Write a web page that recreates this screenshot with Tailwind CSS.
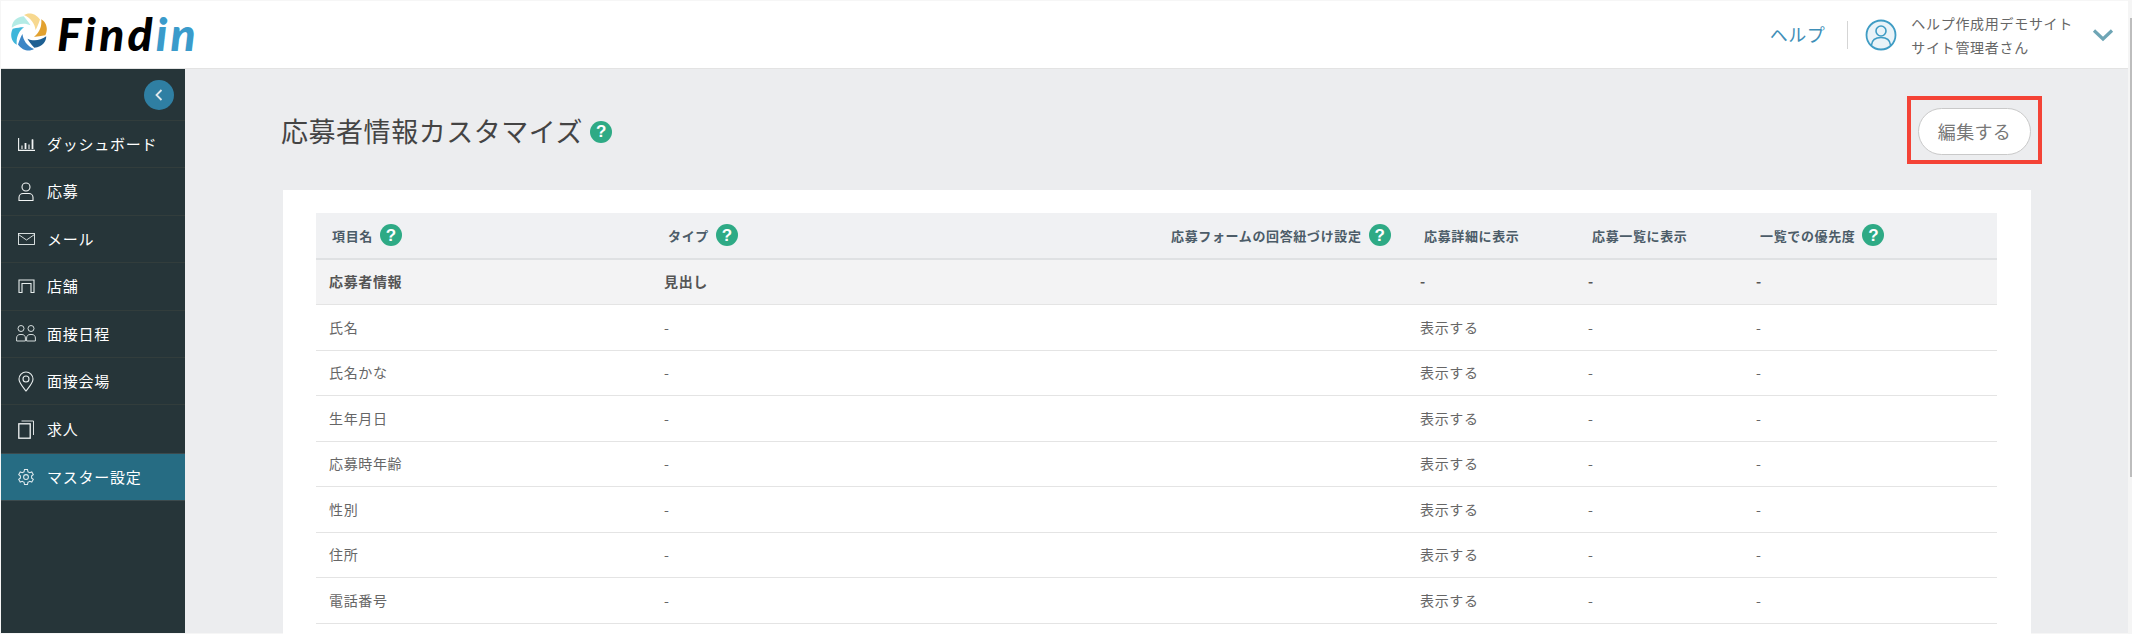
<!doctype html>
<html lang="ja"><head><meta charset="utf-8"><script src="https://cdn.jsdelivr.net/npm/@tailwindcss/browser@4"></script></head>
<body class="m-0">
<div class="relative h-[634px] w-[2132px] overflow-hidden bg-[#f6f6f6] pl-px pt-px pb-px font-['Noto_Sans_CJK_JP',sans-serif] tracking-[0.04em] text-[#666]">
  <div class="flex h-full flex-col">
    <header class="flex h-[68px] shrink-0 items-center justify-between border-b border-[#e3e3e3] bg-white pr-[18px]">
      <div class="flex items-center pl-[9px]">
        <svg width="38" height="38" viewBox="-19 -19 38 38" class="mb-[6px]">
          <path fill="#F7D88F" d="M-5-17C-1-19.500 6-19.500 11-12.500 9-7 8-4 6.500-2 6-8 2-14-5-17Z"/>
          <path fill="#E2A12F" transform="rotate(60)" d="M-5-17C-1-19.500 6-19.500 11-12.500 9-7 8-4 6.500-2 6-8 2-14-5-17Z"/>
          <path fill="#1D5F92" transform="rotate(120)" d="M-5-17C-1-19.500 6-19.500 11-12.500 9-7 8-4 6.500-2 6-8 2-14-5-17Z"/>
          <path fill="#3C86C6" transform="rotate(180)" d="M-5-17C-1-19.500 6-19.500 11-12.500 9-7 8-4 6.500-2 6-8 2-14-5-17Z"/>
          <path fill="#3FB6DA" transform="rotate(240)" d="M-5-17C-1-19.500 6-19.500 11-12.500 9-7 8-4 6.500-2 6-8 2-14-5-17Z"/>
          <path fill="#B4EBE5" transform="rotate(300)" d="M-5-17C-1-19.500 6-19.500 11-12.500 9-7 8-4 6.500-2 6-8 2-14-5-17Z"/>
        </svg>
        <div class="mb-[2px] ml-[9px] font-['Lato',sans-serif] text-[46px] leading-none font-black italic tracking-[0.07em] text-black">Find<span class="text-[#3A9BCB]">in</span></div>
      </div>
      <div class="flex items-center">
        <span class="text-[18px] tracking-[0.03em] text-[#3F8FB8]">ヘルプ</span>
        <div class="ml-[22px] mr-[17px] h-[28px] w-px bg-[#d5d5d5]"></div>
        <svg width="32" height="32" viewBox="0 0 32 32"><circle cx="16" cy="16" r="14.500" fill="#E9F3F8" stroke="#3F9CC4" stroke-width="1.800"/><circle cx="16" cy="12" r="5" fill="none" stroke="#3F9CC4" stroke-width="1.600"/><path d="M6.500 26c.5-5 4-7.500 9.500-7.500s9 2.500 9.500 7.500" fill="none" stroke="#3F9CC4" stroke-width="1.600"/></svg>
        <div class="ml-[14px] text-[14px] leading-[24px] tracking-[0.05em]"><div>ヘルプ作成用デモサイト</div><div>サイト管理者さん</div></div>
        <svg class="ml-[19px]" width="22" height="14" viewBox="0 0 22 14"><path d="M2 2.500 11 11 20 2.500" fill="none" stroke="#6EA5B5" stroke-width="3.200"/></svg>
      </div>
    </header>
    <div class="flex min-h-0 flex-1">
      <aside class="w-[184px] shrink-0 bg-[#263539] text-[15px] tracking-[0.05em] text-white">
        <div class="flex h-[51px] items-center justify-end pr-[11px]">
          <div class="flex h-[30px] w-[30px] items-center justify-center rounded-full bg-[#2F7FA3]">
            <svg width="10" height="14" viewBox="0 0 10 14"><path d="M7.500 2 2.500 7l5 5" fill="none" stroke="#dfe8ec" stroke-width="1.800"/></svg>
          </div>
        </div>
        <nav class="border-t border-[#323d3c]">
          <a class="flex h-[47.4px] items-center border-b border-[#323d3c]"><span class="flex w-[46px] justify-center pl-[5px]"><svg width="17" height="13" viewBox="0 0 17 13" fill="none" stroke="#f2f5f5"><path d="M.6 0v12.400H17M4 7.500V11M7.500 5v6M11 6.500V11M14.500 1.500V11" stroke-width="1.100"/><path d="M7.500 5v6M14.500 1.500V11" stroke-width="1.700"/></svg></span><span>ダッシュボード</span></a>
          <a class="flex h-[47.4px] items-center border-b border-[#323d3c]"><span class="flex w-[46px] justify-center pl-[4px]"><svg width="16" height="20" viewBox="0 0 16 20" fill="none" stroke="#f2f5f5" stroke-width="1.100"><circle cx="8" cy="5" r="4"/><path d="M1 18.500v-3c0-2.500 2-4 4-4h6c2 0 4 1.500 4 4v3z"/></svg></span><span>応募</span></a>
          <a class="flex h-[47.4px] items-center border-b border-[#323d3c]"><span class="flex w-[46px] justify-center pl-[4px]"><svg width="17" height="12" viewBox="0 0 17 12" fill="none" stroke="#e8eeee" stroke-width=".9"><rect x=".5" y=".5" width="16" height="11"/><path d="M.5 1.500l8 5.500 8-5.500"/></svg></span><span>メール</span></a>
          <a class="flex h-[47.4px] items-center border-b border-[#323d3c]"><span class="flex w-[46px] justify-center pl-[4px]"><svg width="17" height="14" viewBox="0 0 17 14" fill="none" stroke="#e8eeee" stroke-width="1.100"><path d="M1 13.500V1h15v12.500h-3V4.500H4v9z"/></svg></span><span>店舗</span></a>
          <a class="flex h-[47.4px] items-center border-b border-[#323d3c]"><span class="flex w-[46px] justify-center pl-[4px]"><svg width="20" height="17" viewBox="0 0 20 17" fill="none" stroke="#e8eeee" stroke-width=".9"><circle cx="5" cy="3.500" r="3"/><circle cx="15" cy="3.500" r="3"/><path d="M.6 16v-3c0-2 1.400-3.500 3.400-3.500h2c2 0 3.400 1.500 3.400 3.500v3zM10.600 16v-3c0-2 1.400-3.500 3.400-3.500h2c2 0 3.400 1.500 3.400 3.500v3z"/></svg></span><span>面接日程</span></a>
          <a class="flex h-[47.4px] items-center border-b border-[#323d3c]"><span class="flex w-[46px] justify-center pl-[4px]"><svg width="16" height="21" viewBox="0 0 16 21" fill="none" stroke="#e8eeee" stroke-width="1.100"><path d="M8 20C5 16 1 12 1 8a7 7 0 0 1 14 0c0 4-4 8-7 12z"/><circle cx="8" cy="8" r="3"/></svg></span><span>面接会場</span></a>
          <a class="flex h-[47.4px] items-center"><span class="flex w-[46px] justify-center pl-[4px]"><svg width="16" height="19" viewBox="0 0 16 19" fill="none" stroke="#f2f5f5"><rect x=".8" y="3.800" width="11.400" height="14.400" stroke-width="1.300"/><path d="M3.500 1h12v14" stroke-width=".9"/></svg></span><span>求人</span></a>
          <a class="flex h-[47.4px] items-center border-t border-[#3c4a4d] bg-[#266C83]"><span class="flex w-[46px] justify-center pl-[4px]"><svg width="18" height="18" viewBox="0 0 24 24" fill="none" stroke="#dfeaee" stroke-width="1.400"><path d="M10 2h4l.6 3a7.500 7.500 0 0 1 2.200 1.300l2.900-1 2 3.400-2.300 2a7.500 7.500 0 0 1 0 2.600l2.300 2-2 3.400-2.900-1a7.500 7.500 0 0 1-2.200 1.300L14 22h-4l-.6-3a7.500 7.500 0 0 1-2.200-1.300l-2.900 1-2-3.400 2.300-2a7.500 7.500 0 0 1 0-2.600l-2.300-2 2-3.400 2.900 1A7.500 7.500 0 0 1 9.400 5z"/><circle cx="12" cy="12" r="3.200"/></svg></span><span>マスター設定</span></a>
          <div class="h-px bg-[#3c4a4d]"></div>
        </nav>
      </aside>
      <main class="min-w-0 flex-1 bg-[#ECEDEF] pl-[98px] pr-[101px] pt-[39px]">
        <div class="flex h-[47px] items-center justify-between">
          <h1 class="ml-[-2px] flex items-center text-[27px] font-normal tracking-[0.02em] text-[#444]">応募者情報カスタマイズ<span class="ml-[7px] flex h-[22px] w-[22px] items-center justify-center rounded-full bg-[#2EAA85] font-['Liberation_Sans',sans-serif] text-[17px] font-bold tracking-normal text-white">?</span></h1>
          <button class="h-[47px] w-[113px] rounded-full border border-[#c9c9c9] bg-white text-center text-[18px] tracking-[0.02em] text-[#777]">編集する</button>
        </div>
        <section class="mt-[35px] bg-white pl-[33px] pr-[34px] pt-[23px] pb-[40px] text-[14px]">
          <div class="grid h-[46.5px] grid-cols-[335px_503px_253px_168px_168px_254px] items-center border-b-2 border-[#dfe1e3] bg-[#F0F1F3] text-[13px] font-bold text-[#4C5C68]">
            <div class="flex items-center pl-[16px]">項目名<span class="ml-[7px] flex h-[22px] w-[22px] items-center justify-center rounded-full bg-[#2EAA85] font-['Liberation_Sans',sans-serif] text-[17px] font-bold tracking-normal text-white">?</span></div>
            <div class="flex items-center pl-[17px]">タイプ<span class="ml-[7px] flex h-[22px] w-[22px] items-center justify-center rounded-full bg-[#2EAA85] font-['Liberation_Sans',sans-serif] text-[17px] font-bold tracking-normal text-white">?</span></div>
            <div class="flex items-center pl-[17px]">応募フォームの回答紐づけ設定<span class="ml-[7px] flex h-[22px] w-[22px] items-center justify-center rounded-full bg-[#2EAA85] font-['Liberation_Sans',sans-serif] text-[17px] font-bold tracking-normal text-white">?</span></div>
            <div class="pl-[17px]">応募詳細に表示</div>
            <div class="pl-[17px]">応募一覧に表示</div>
            <div class="flex items-center pl-[17px]">一覧での優先度<span class="ml-[7px] flex h-[22px] w-[22px] items-center justify-center rounded-full bg-[#2EAA85] font-['Liberation_Sans',sans-serif] text-[17px] font-bold tracking-normal text-white">?</span></div>
          </div>
          <div class="grid h-[45.5px] grid-cols-[335px_503px_253px_168px_168px_254px] items-center border-b border-[#e4e4e4] bg-[#F3F3F4] font-bold text-[#555]"><div class="pl-[13px]">応募者情報</div><div class="pl-[13px]">見出し</div><div></div><div class="pl-[13px]">-</div><div class="pl-[13px]">-</div><div class="pl-[13px]">-</div></div>
          <div class="grid h-[45.5px] grid-cols-[335px_503px_253px_168px_168px_254px] items-center border-b border-[#e4e4e4]"><div class="pl-[13px]">氏名</div><div class="pl-[13px]">-</div><div></div><div class="pl-[13px]">表示する</div><div class="pl-[13px]">-</div><div class="pl-[13px]">-</div></div>
          <div class="grid h-[45.5px] grid-cols-[335px_503px_253px_168px_168px_254px] items-center border-b border-[#e4e4e4]"><div class="pl-[13px]">氏名かな</div><div class="pl-[13px]">-</div><div></div><div class="pl-[13px]">表示する</div><div class="pl-[13px]">-</div><div class="pl-[13px]">-</div></div>
          <div class="grid h-[45.5px] grid-cols-[335px_503px_253px_168px_168px_254px] items-center border-b border-[#e4e4e4]"><div class="pl-[13px]">生年月日</div><div class="pl-[13px]">-</div><div></div><div class="pl-[13px]">表示する</div><div class="pl-[13px]">-</div><div class="pl-[13px]">-</div></div>
          <div class="grid h-[45.5px] grid-cols-[335px_503px_253px_168px_168px_254px] items-center border-b border-[#e4e4e4]"><div class="pl-[13px]">応募時年齢</div><div class="pl-[13px]">-</div><div></div><div class="pl-[13px]">表示する</div><div class="pl-[13px]">-</div><div class="pl-[13px]">-</div></div>
          <div class="grid h-[45.5px] grid-cols-[335px_503px_253px_168px_168px_254px] items-center border-b border-[#e4e4e4]"><div class="pl-[13px]">性別</div><div class="pl-[13px]">-</div><div></div><div class="pl-[13px]">表示する</div><div class="pl-[13px]">-</div><div class="pl-[13px]">-</div></div>
          <div class="grid h-[45.5px] grid-cols-[335px_503px_253px_168px_168px_254px] items-center border-b border-[#e4e4e4]"><div class="pl-[13px]">住所</div><div class="pl-[13px]">-</div><div></div><div class="pl-[13px]">表示する</div><div class="pl-[13px]">-</div><div class="pl-[13px]">-</div></div>
          <div class="grid h-[45.5px] grid-cols-[335px_503px_253px_168px_168px_254px] items-center border-b border-[#e4e4e4]"><div class="pl-[13px]">電話番号</div><div class="pl-[13px]">-</div><div></div><div class="pl-[13px]">表示する</div><div class="pl-[13px]">-</div><div class="pl-[13px]">-</div></div>
        </section>
      </main>
    </div>
  </div>
  <div class="absolute left-[1907px] top-[96px] h-[68px] w-[135px] border-[4px] border-[#F44336]"></div>
  <div class="absolute right-0 top-0 h-full w-[4px] bg-[#f5f5f5]"><div class="ml-[2px] mt-[18px] h-[459px] w-[2px] bg-[#bdbdbd]"></div></div>
</div>
</body></html>
